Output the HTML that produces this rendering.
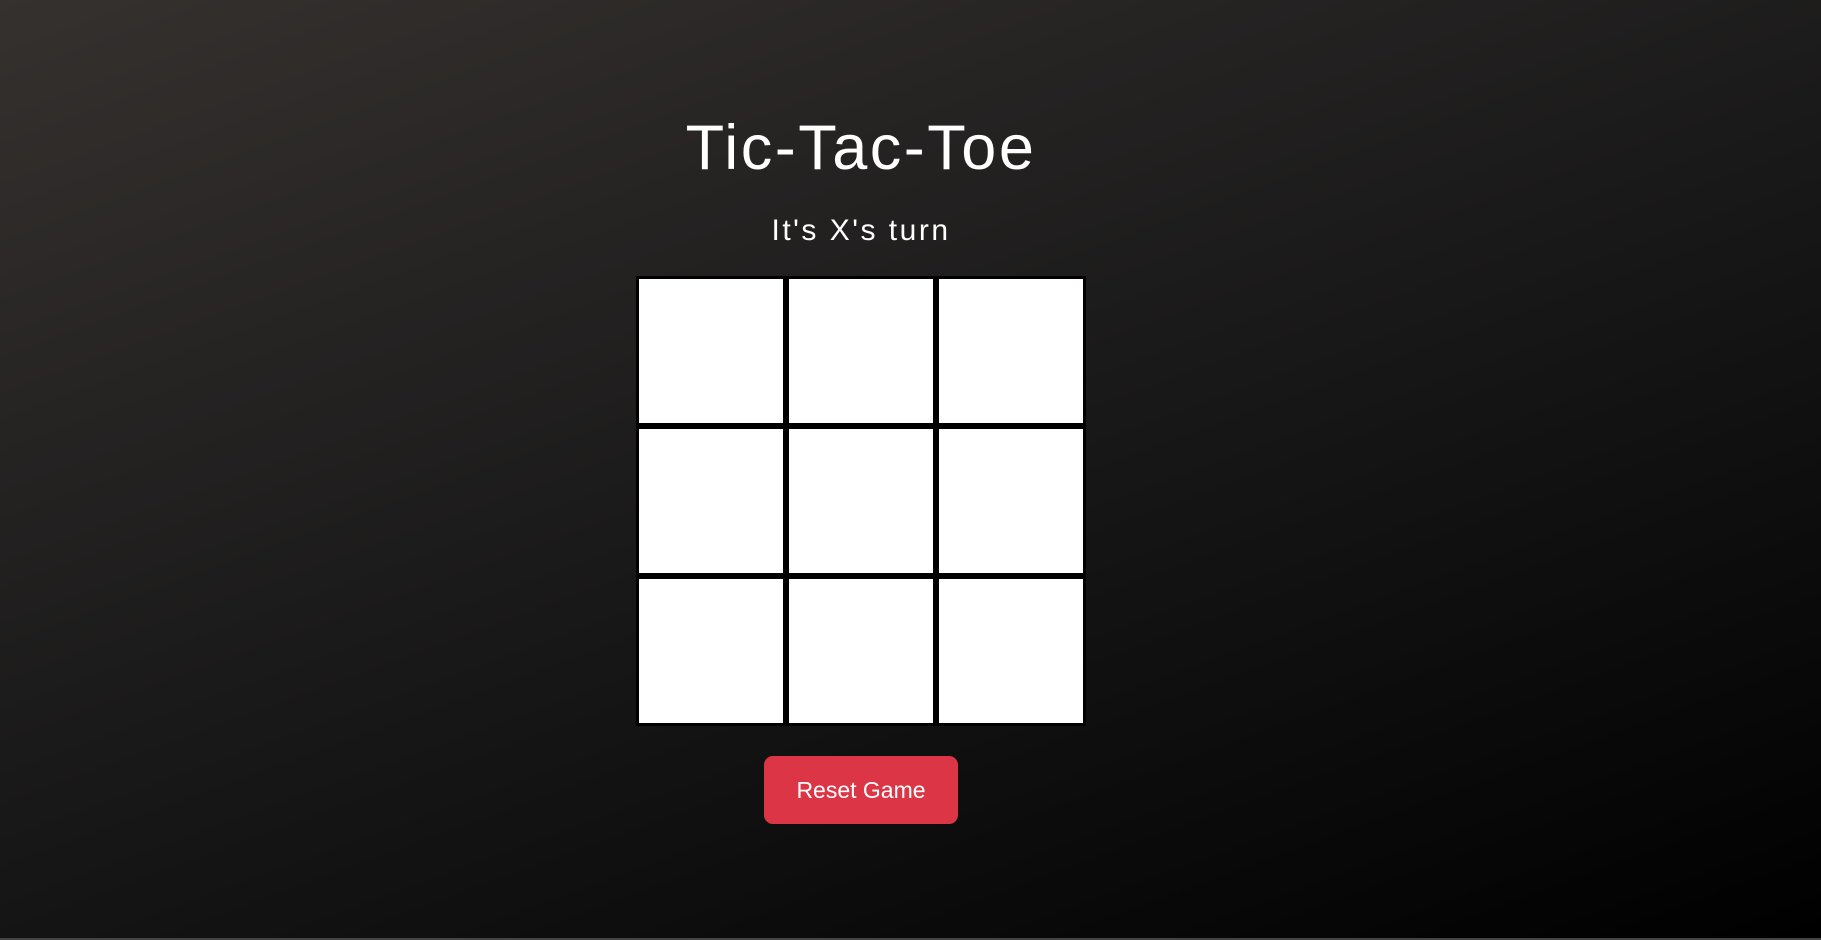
<!DOCTYPE html>
<html><head><style>
html,body{margin:0;padding:0}
body{width:1821px;height:940px;overflow:hidden;position:relative;background:linear-gradient(160deg,#35312f 0%,#1c1b1b 45%,#000 100%);font-family:"Comic Sans MS","Liberation Sans",sans-serif;color:#fff}
h1{position:absolute;left:0;width:1722px;top:108px;margin:0;text-align:center;font-weight:normal;font-size:63px;line-height:80px;letter-spacing:2.5px}
.st{position:absolute;left:0;width:1722px;top:213px;text-align:center;font-size:30px;line-height:36px;letter-spacing:2.5px}
.board{position:absolute;left:636px;top:276px;width:450px;height:450px;display:grid;grid-template-columns:repeat(3,150px);grid-template-rows:repeat(3,150px)}
.c{box-sizing:border-box;border:3px solid #000;background:#fff}
.btn{position:absolute;left:764px;top:756px;width:194px;height:68px;border-radius:9px;background:#dc3545;font-size:23px;line-height:68px;text-align:center}
.bl{position:absolute;left:0;right:0;bottom:0;height:2px;background:#444}
</style></head><body>
<h1>Tic-Tac-Toe</h1>
<div class="st">It's X's turn</div>
<div class="board"><div class="c"></div><div class="c"></div><div class="c"></div><div class="c"></div><div class="c"></div><div class="c"></div><div class="c"></div><div class="c"></div><div class="c"></div></div>
<div class="btn">Reset Game</div>
<div class="bl"></div>
</body></html>
